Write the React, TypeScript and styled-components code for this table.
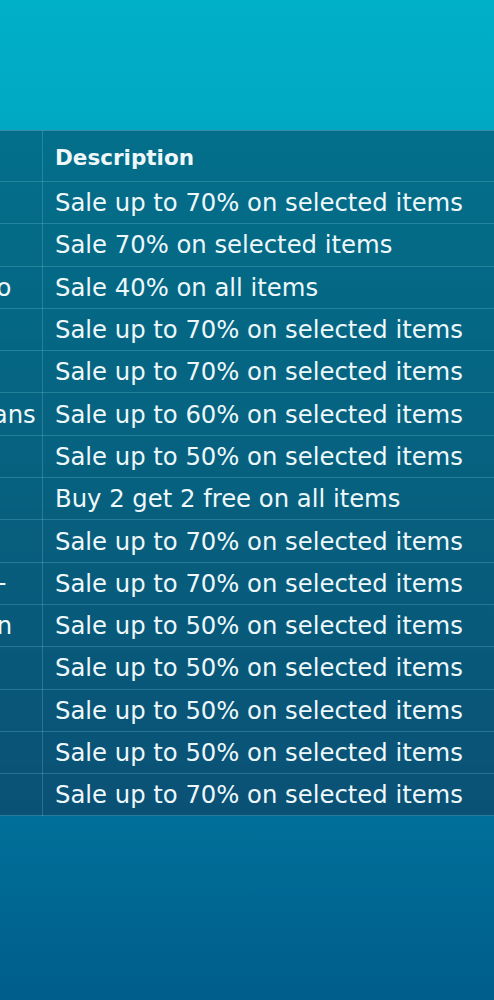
import React from "react";
import styled, { createGlobalStyle } from "styled-components";

const GlobalStyle = createGlobalStyle`
  html, body {
    margin: 0;
    padding: 0;
  }
  body {
    background: linear-gradient(180deg, #00b0c8 0%, #00a6c2 15%, #008bb0 50%, #006f99 82%, #005d8c 100%);
    min-height: 1000px;
    font-family: "DejaVu Sans", "Noto Sans", sans-serif;
  }
`;

const Page = styled.div`
  height: 1000px;
  padding-top: 130px;
  box-sizing: border-box;
  overflow: hidden;
`;

const Viewport = styled.div`
  overflow: hidden;
  width: 494px;
`;

const Table = styled.table`
  border-collapse: collapse;
  margin-left: -191px;
  width: 760px;
  table-layout: fixed;
  background: linear-gradient(180deg, #036f8a 0%, #06617f 50%, #0a5175 100%);
  color: #eef8fb;
`;

const StoreCol = styled.col`
  width: 233px;
`;

const HeadCell = styled.th`
  height: 48px;
  padding: 2px 12px 0;
  text-align: left;
  font-weight: 700;
  font-size: 21.5px;
  border: 1px solid rgba(120, 200, 220, 0.28);
  border-top-color: rgba(140, 220, 235, 0.35);
  white-space: nowrap;
  overflow: hidden;
`;

const Cell = styled.td`
  height: 41.3px;
  padding: 0 12px;
  text-align: left;
  font-size: 24.3px;
  font-weight: 400;
  border: 1px solid rgba(120, 200, 220, 0.28);
  white-space: nowrap;
  overflow: hidden;
`;

const rows: [string, string][] = [
  ["Urban Style", "Sale up to 70% on selected items"],
  ["Glam Shop", "Sale 70% on selected items"],
  ["Boutique Torino", "Sale 40% on all items"],
  ["Nordic Home", "Sale up to 70% on selected items"],
  ["Kids Corner", "Sale up to 70% on selected items"],
  ["Blue Denim Jeans", "Sale up to 60% on selected items"],
  ["Sport Zone", "Sale up to 50% on selected items"],
  ["Shoe Palace", "Buy 2 get 2 free on all items"],
  ["Beauty Bar", "Sale up to 70% on selected items"],
  ["Gadget Shop +", "Sale up to 70% on selected items"],
  ["Modern Kitchen", "Sale up to 50% on selected items"],
  ["Book Nook", "Sale up to 50% on selected items"],
  ["Gift Gallery", "Sale up to 50% on selected items"],
  ["Lux Optics", "Sale up to 50% on selected items"],
  ["Pet Paradise", "Sale up to 70% on selected items"],
];

export default function App() {
  return (
    <>
      <GlobalStyle />
      <Page>
        <Viewport>
          <Table>
            <colgroup>
              <StoreCol />
              <col />
            </colgroup>
            <thead>
              <tr>
                <HeadCell>Store</HeadCell>
                <HeadCell>Description</HeadCell>
              </tr>
            </thead>
            <tbody>
              {rows.map(([store, desc], i) => (
                <tr key={i}>
                  <Cell>{store}</Cell>
                  <Cell>{desc}</Cell>
                </tr>
              ))}
            </tbody>
          </Table>
        </Viewport>
      </Page>
    </>
  );
}
